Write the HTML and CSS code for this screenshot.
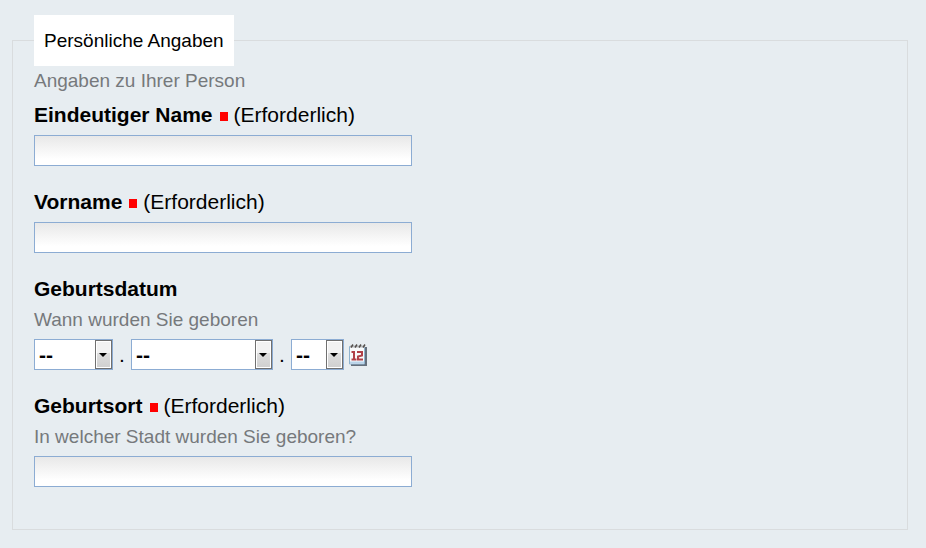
FILE: index.html
```html
<!DOCTYPE html>
<html lang="de">
<head>
<meta charset="UTF-8">
<meta name="viewport" content="width=device-width, initial-scale=1.0">
<title>Persönliche Angaben</title>
<link rel="stylesheet" href="styles.css">
</head>
<body>
    <form>
        <fieldset class="group">
            <legend>Persönliche Angaben</legend>
            <p class="help">Angaben zu Ihrer Person</p>

            <div class="field">
                <label for="uniqueName"><b>Eindeutiger Name</b><span class="required"></span>(Erforderlich)</label>
                <input type="text" id="uniqueName" name="uniqueName">
            </div>

            <div class="field">
                <label for="firstName"><b>Vorname</b><span class="required"></span>(Erforderlich)</label>
                <input type="text" id="firstName" name="firstName">
            </div>

            <div class="field">
                <label for="birthYear"><b>Geburtsdatum</b></label>
                <p class="help">Wann wurden Sie geboren</p>
                <div class="date">
                    <span class="select year">
                        <select id="birthYear" name="year" aria-label="Jahr"><option>--</option></select>
                    </span>
                    <span class="dot">.</span>
                    <span class="select month">
                        <select name="month" aria-label="Monat"><option>--</option></select>
                    </span>
                    <span class="dot">.</span>
                    <span class="select day">
                        <select name="day" aria-label="Tag"><option>--</option></select>
                    </span>
                    <button type="button" class="calendar" aria-label="Kalender">
                        <svg width="20" height="24" viewBox="0 0 20 24">
                            <path d="M3 22h15V4" fill="none" stroke="#66707c" stroke-width="2"/>
                            <path d="M1.500 3.500h15v17.500h-15z" fill="#f8fafb" stroke="#8fb3cf"/>
                            <path d="M2 18.500h14v2H2z" fill="#b9d4ea"/>
                            <path d="M2 3.500h15" stroke="#b9bcbe" stroke-width="2"/>
                            <path d="M3 4.500l2-3M7 4.500l2-3M11 4.500l2-3M15 4.500l2-3" stroke="#55504e" stroke-width="1.500"/>
                            <path d="M3.500 9H6v7.500M3.500 16.500h5M9 9h5v3.500l-4 1v3h5" fill="none" stroke="#b04048" stroke-width="2"/>
                        </svg>
                    </button>
                </div>
            </div>

            <div class="field">
                <label for="birthPlace"><b>Geburtsort</b><span class="required"></span>(Erforderlich)</label>
                <p class="help">In welcher Stadt wurden Sie geboren?</p>
                <input type="text" id="birthPlace" name="birthPlace">
            </div>
        </fieldset>
    </form>
</body>
</html>
```
FILE: styles.css
```css
body {
    margin: 0;
    padding: 15px 18px 18px 12px;
    background-color: #e7edf1;
    color: #000;
    font-family: "Liberation Sans", Arial, sans-serif;
    font-size: 21px;
}

.group {
    margin: 0;
    padding: 0 21px 42px;
    border: 1px solid #d9dcde;
}

legend {
    padding: 10px;
    background-color: #fff;
    font-size: 19px;
    line-height: 31px;
}

.help {
    margin: 0;
    color: #76797c;
    font-size: 19px;
    line-height: 30px;
}

.field {
    margin-bottom: 20px;
}

.group > .help {
    margin-bottom: 3px;
}

.field:last-child {
    margin-bottom: 0;
}

label {
    display: block;
    line-height: 32px;
}

/* red marker between the label and its hint */
.required {
    display: inline-block;
    width: 8px;
    height: 9px;
    margin: 0 6px 0 7px;
    background-color: #f00;
    vertical-align: 1px;
}

input {
    display: block;
    box-sizing: border-box;
    width: 378px;
    max-width: 100%;
    height: 31px;
    margin: 4px 0 0;
    padding: 2px 4px;
    border: 1px solid #8cacd3;
    background: linear-gradient(#e8e8e8, #fff 80%);
    font: inherit;
}

.date {
    display: flex;
    align-items: center;
    margin-top: 4px;
}

.select {
    position: relative;
    height: 31px;
}

.year {
    width: 79px;
}

.month {
    width: 142px;
}

.day {
    width: 53px;
}

select {
    display: block;
    box-sizing: border-box;
    width: 100%;
    height: 100%;
    margin: 0;
    padding: 0 4px;
    appearance: none;
    border: 1px solid #8cacd3;
    border-radius: 0;
    background-color: #fff;
    color: #000;
    font: bold 21px "Liberation Sans", Arial, sans-serif;
}

/* drop-down button */
.select::before {
    content: "";
    position: absolute;
    top: 1px;
    right: 1px;
    box-sizing: border-box;
    width: 17px;
    height: 29px;
    border: 1px solid #707070;
    box-shadow: inset 0 0 0 1px #fff;
    background: linear-gradient(#f2f2f2 45%, #dedede 46%, #cfcfcf);
    pointer-events: none;
}

.select::after {
    content: "";
    position: absolute;
    top: 14px;
    right: 6px;
    border: 4px solid transparent;
    border-top-color: #000;
    border-bottom: 0;
    pointer-events: none;
}

.dot {
    width: 18px;
    text-align: center;
}

.calendar {
    display: flex;
    margin: 0 0 0 4px;
    padding: 0;
    border: 0;
    background: none;
    cursor: pointer;
}
```
